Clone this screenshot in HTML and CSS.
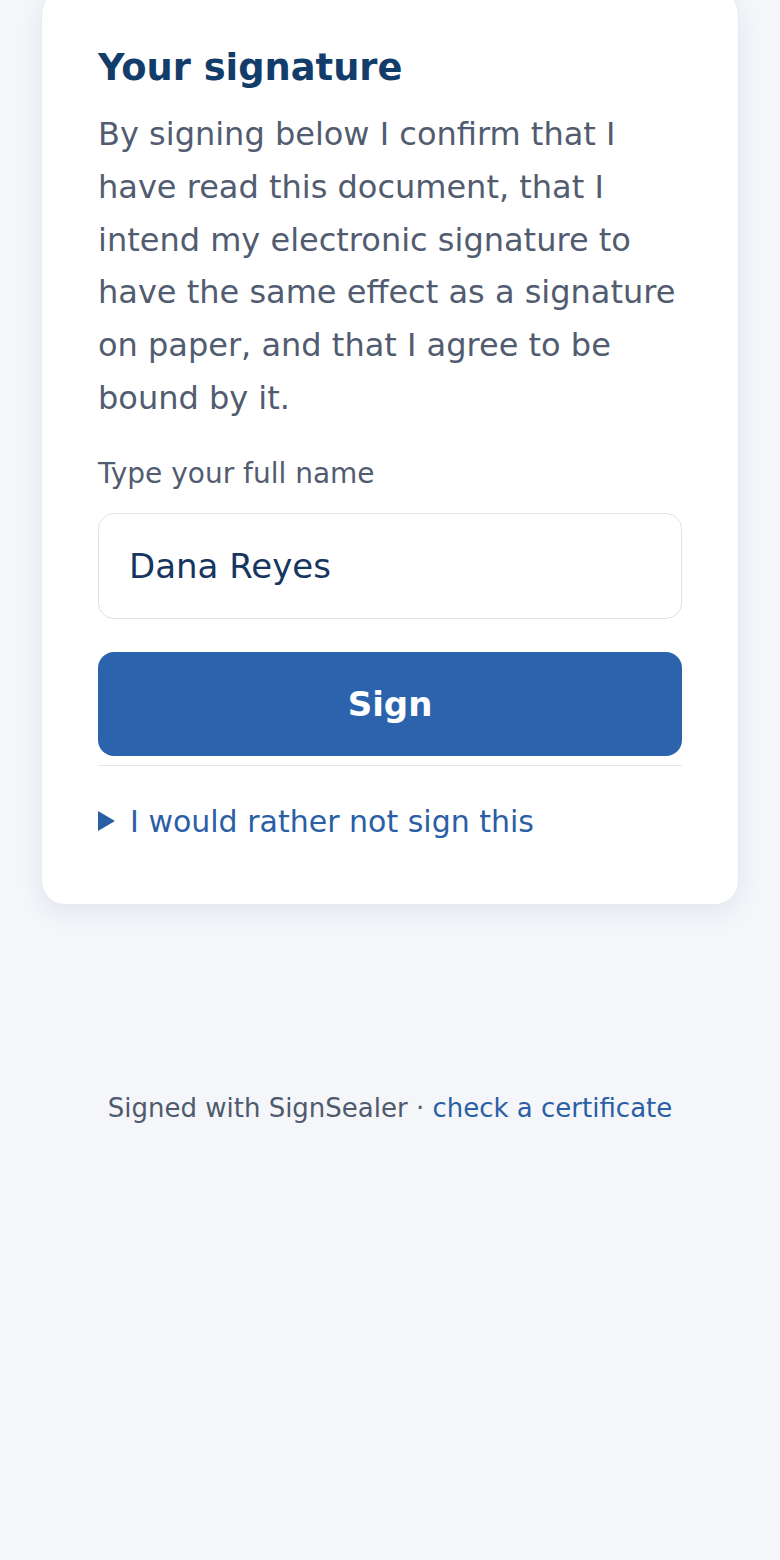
FILE: index.html
```html
<!DOCTYPE html>
<html lang="en">
<head>
<meta charset="UTF-8">
<meta name="viewport" content="width=device-width, initial-scale=1.0">
<title>Sign document</title>
<link rel="stylesheet" href="styles.css">
</head>
<body>

<div class="card">
    <h2 class="card-title">Your signature</h2>
    <p class="consent">By signing below I confirm that I have read this document, that I intend my electronic signature to have the same effect as a signature on paper, and that I agree to be bound by it.</p>
    <label class="field-label" for="fullName">Type your full name</label>
    <input class="name-input" type="text" id="fullName" value="Dana Reyes">
    <button class="sign-button">Sign</button>
    <details class="decline">
        <summary>I would rather not sign this</summary>
    </details>
</div>

<div class="footer">
    Signed with SignSealer &middot; <a href="#">check a certificate</a>
</div>

</body>
</html>
```

FILE: styles.css
```css
body {
    font-family: "DejaVu Sans", Verdana, sans-serif;
    background-color: #f4f6fa;
    margin: 0;
    padding: 0;
}
.card {
    margin: -10px 41px 0;
    padding: 56px 56px 60px;
    background-color: #fff;
    border: 1px solid #e6eaf1;
    border-radius: 24px;
    box-shadow: 0 8px 24px rgba(30, 50, 90, 0.08);
}
.card-title {
    margin: 0;
    font-size: 36.8px;
    line-height: 42px;
    font-weight: bold;
    color: #123d6b;
}
.consent {
    margin: 19px 0 0;
    font-size: 32px;
    line-height: 1.65;
    color: #525c70;
}
.field-label {
    display: block;
    margin-top: 29px;
    font-size: 28px;
    line-height: 40px;
    color: #525c70;
}
.name-input {
    display: block;
    box-sizing: border-box;
    width: 100%;
    height: 106px;
    margin-top: 19px;
    padding: 0 30px;
    font-family: inherit;
    font-size: 34px;
    color: #17365f;
    background-color: #fff;
    border: 1px solid #dde3ea;
    border-radius: 16px;
    outline: none;
}
.sign-button {
    display: block;
    width: 100%;
    height: 104px;
    margin-top: 33px;
    font-family: inherit;
    font-size: 34px;
    font-weight: bold;
    color: #fff;
    background-color: #2b64ad;
    border: none;
    border-radius: 16px;
    cursor: pointer;
}
.decline {
    margin-top: 9px;
    padding-top: 33px;
    border-top: 1px solid #dfe6ee;
}
.decline summary {
    list-style: none;
    display: flex;
    align-items: center;
    gap: 15px;
    font-size: 30px;
    line-height: 1.5;
    color: #2b5fa5;
    cursor: pointer;
}
.decline summary::-webkit-details-marker {
    display: none;
}
.decline summary::before {
    content: "";
    border-left: 17px solid #2b5fa5;
    border-top: 10px solid transparent;
    border-bottom: 10px solid transparent;
}
.footer {
    margin-top: 184px;
    text-align: center;
    font-size: 26px;
    line-height: 1.5;
    color: #4f5a6d;
}
.footer a {
    text-decoration: none;
    color: #2b5fa5;
}
```
